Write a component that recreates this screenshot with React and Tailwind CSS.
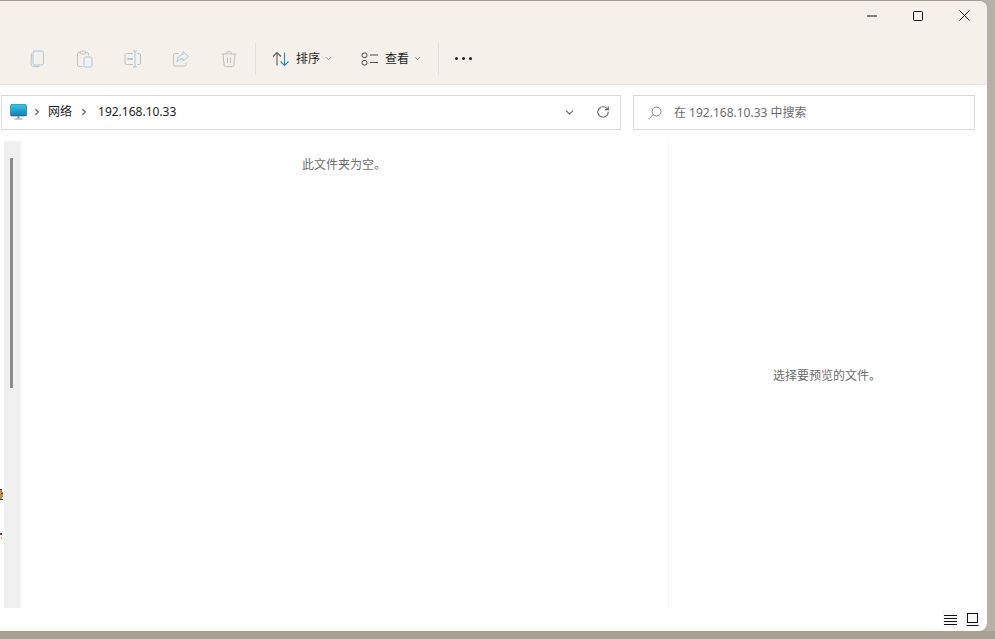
import { ChevronDown, ChevronRight, RotateCw } from 'lucide-react';

const FONT = "font-['Noto_Sans','Noto_Sans_CJK_SC',sans-serif]";

function CopyIcon() {
    return (
        <svg width="18" height="18" viewBox="0 0 18 18" fill="none">
            <path d="M3.5 3.5 L3 14 Q3 16.5 5.5 16.5 L11.5 16.5" stroke="#c4c1bc" strokeWidth="1" />
            <rect x="5" y="1" width="10.5" height="14" rx="2" stroke="#a3cbe8" strokeWidth="1" />
        </svg>
    );
}

function PasteIcon() {
    return (
        <svg width="18" height="18" viewBox="0 0 18 18" fill="none">
            <path d="M6 16.5 H3 Q1.5 16.5 1.5 15 V4 Q1.5 2.5 3 2.5 H11 Q12.5 2.5 12.5 4 V5.5" stroke="#c4c1bc" strokeWidth="1" />
            <rect x="4.5" y="1" width="5" height="3" rx="1" stroke="#c4c1bc" strokeWidth="1" fill="#f5f0ea" />
            <rect x="8" y="7" width="8" height="10" rx="1.5" stroke="#a3cbe8" strokeWidth="1" />
        </svg>
    );
}

function RenameIcon() {
    return (
        <svg width="18" height="18" viewBox="0 0 18 18" fill="none">
            <path d="M9 3.5 H2.5 Q1 3.5 1 5 V13 Q1 14.500 2.500 14.500 H9" stroke="#c4c1bc" strokeWidth="1" />
            <path d="M13.500 3.500 H15 Q16.500 3.500 16.500 5 V13 Q16.500 14.500 15 14.500 H13.500" stroke="#c4c1bc" strokeWidth="1" />
            <path d="M9 1 H13 M11 1 V17 M9 17 H13" stroke="#a3cbe8" strokeWidth="1" />
            <path d="M3.500 9 H9" stroke="#a3cbe8" strokeWidth="2" />
        </svg>
    );
}

function ShareIcon() {
    return (
        <svg width="18" height="18" viewBox="0 0 18 18" fill="none">
            <path d="M6.500 3.500 H3 Q1.500 3.500 1.500 5 V14.500 Q1.500 16 3 16 H12.500 Q14 16 14 14.500 V12.500" stroke="#c4c1bc" strokeWidth="1" />
            <path d="M11 1.500 L16.500 6.500 L11 11 V8.500 Q7 8.500 5 12 Q5.500 5 11 4.500 Z" stroke="#a3cbe8" strokeWidth="1" strokeLinejoin="round" />
        </svg>
    );
}

function TrashIcon() {
    return (
        <svg width="18" height="18" viewBox="0 0 18 18" fill="none" stroke="#c4c1bc" strokeWidth="1">
            <path d="M1.500 4 H16.500 M6.500 4 Q6.500 1.500 9 1.500 Q11.500 1.500 11.500 4" />
            <path d="M3 4 L4 15 Q4.200 16.500 5.700 16.500 H12.300 Q13.800 16.500 14 15 L15 4" />
            <path d="M7.500 7.500 V13 M10.500 7.500 V13" />
        </svg>
    );
}

function SortIcon() {
    return (
        <svg width="18" height="16" viewBox="0 0 18 16" fill="none" strokeWidth="1.100">
            <path d="M5 14.500 V1.500 M1 5.500 L5 1.500 L9 5.500" stroke="#5c5a58" />
            <path d="M12.500 1.500 V14.500 M8.500 10.500 L12.500 14.500 L16.500 10.500" stroke="#1f8ad6" />
        </svg>
    );
}

function ViewIcon() {
    return (
        <svg width="18" height="14" viewBox="0 0 18 14" fill="none" stroke="#4a4a4a" strokeWidth="1">
            <rect x="1" y="1" width="5" height="4.500" rx="2" />
            <rect x="1" y="8.500" width="5" height="4.500" rx="2" />
            <path d="M9 3 H17 M9 10.500 H17" />
        </svg>
    );
}

function MonitorIcon() {
    return (
        <svg width="17" height="16" viewBox="0 0 17 16" fill="none">
            <defs>
                <linearGradient id="screen" x1="0" y1="0" x2="0" y2="1">
                    <stop offset="0" stopColor="#37c6e6" />
                    <stop offset="1" stopColor="#0f7fb0" />
                </linearGradient>
            </defs>
            <rect x="0.500" y="0.500" width="16" height="11.500" rx="1" fill="url(#screen)" stroke="#14698f" strokeWidth="0.600" />
            <rect x="7.500" y="12" width="2" height="2.500" fill="#8c9297" />
            <rect x="4.500" y="14.500" width="8" height="1" fill="#8c9297" />
        </svg>
    );
}

function SearchIcon() {
    return (
        <svg width="14" height="14" viewBox="0 0 14 14" fill="none">
            <circle cx="8.500" cy="5.500" r="4.500" stroke="#8a8580" strokeWidth="1" />
            <path d="M5.300 8.700 L0.700 13.300" stroke="#b09a92" strokeWidth="1.100" />
        </svg>
    );
}

function ToolButton({ children }) {
    return <div className="w-12 flex items-center justify-center">{children}</div>;
}

export default function App() {
    return (
        <div className={`w-[995px] h-[639px] overflow-hidden flex flex-col bg-[#b8b0a4] ${FONT}`}>
            <div className="w-[987px] h-[631px] shrink-0 flex flex-col bg-white rounded-r-lg overflow-hidden border-t border-[#a39d93]">
                {/* title + command bar */}
                <div className="h-[84px] shrink-0 bg-[#f5f0ea] border-b border-[#e4e1dc] flex flex-col">
                    <div className="h-[29px] flex justify-end items-center pr-[17px] gap-[36px] text-black">
                        <svg width="10" height="10" viewBox="0 0 10 10" fill="none" stroke="#111" strokeWidth="1"><path d="M0 5 H10" /></svg>
                        <svg width="10" height="10" viewBox="0 0 10 10" fill="none" stroke="#111" strokeWidth="1"><rect x="0.500" y="0.500" width="9" height="9" rx="1" /></svg>
                        <svg width="11" height="11" viewBox="0 0 11 11" fill="none" stroke="#111" strokeWidth="1"><path d="M0.500 0.500 L10.500 10.500 M10.500 0.500 L0.500 10.500" /></svg>
                    </div>
                    <div className="h-[33px] mt-[12px] flex items-center pl-[13px]">
                        <ToolButton><CopyIcon /></ToolButton>
                        <ToolButton><PasteIcon /></ToolButton>
                        <ToolButton><RenameIcon /></ToolButton>
                        <ToolButton><ShareIcon /></ToolButton>
                        <ToolButton><TrashIcon /></ToolButton>
                        <div className="w-px h-8 bg-[#e3e0db] ml-[2px]" />
                        <div className="flex items-center ml-[16px] text-xs text-[#1c1c1c]">
                            <SortIcon />
                            <span className="ml-[6px]">排序</span>
                            <ChevronDown size={9} className="ml-[4px] text-[#777]" />
                        </div>
                        <div className="flex items-center ml-[28px] text-xs text-[#1c1c1c]">
                            <ViewIcon />
                            <span className="ml-[6px]">查看</span>
                            <ChevronDown size={9} className="ml-[4px] text-[#777]" />
                        </div>
                        <div className="w-px h-8 bg-[#e3e0db] ml-[16px]" />
                        <div className="flex items-center gap-[4px] ml-[16px]">
                            <span className="w-[3px] h-[3px] rounded-full bg-[#222]" />
                            <span className="w-[3px] h-[3px] rounded-full bg-[#222]" />
                            <span className="w-[3px] h-[3px] rounded-full bg-[#222]" />
                        </div>
                    </div>
                </div>

                {/* address + search */}
                <div className="h-[56px] shrink-0 flex items-start pt-[10px] pl-[1px] pr-[12px] gap-[12px]">
                    <div className="w-[620px] h-[35px] border border-[#d9d9d9] flex items-center pl-[8px] pr-[10px] pb-[1px] text-xs text-[#1c1c1c]">
                        <MonitorIcon />
                        <ChevronRight size={10} strokeWidth={3} className="ml-[5px] text-[#666]" />
                        <span className="ml-[6px]">网络</span>
                        <ChevronRight size={10} strokeWidth={3} className="ml-[7px] text-[#666]" />
                        <span className="ml-[9px]">192.168.10.33</span>
                        <ChevronDown size={13} className="ml-auto text-[#666]" />
                        <RotateCw size={14} className="ml-[20px] text-[#666]" />
                    </div>
                    <div className="flex-1 h-[35px] border border-[#d9d9d9] flex items-center pl-[14px] text-xs text-[#6b6b6b]">
                        <SearchIcon />
                        <span className="ml-[12px]">在 192.168.10.33 中搜索</span>
                    </div>
                </div>

                {/* panes */}
                <div className="h-[467px] shrink-0 flex relative">
                    <div className="w-[4px] relative">
                        <svg className="absolute left-0 top-[348px]" width="4" height="58" viewBox="0 0 4 58">
                            <path d="M0 1 H2 V3 H3 V8 H2 V10 H0 Z" fill="#c98a3c" />
                            <path d="M0 0 H2 V1 H0 Z M1 4 H3 V5 H1 Z M0 10 H3 V11 H0 Z" fill="#2c3a5c" />
                            <path d="M0 44 H2 V46 H0 Z" fill="#5c3a78" />
                            <path d="M1 48 H2 V50 H1 Z" fill="#e8a020" />
                        </svg>
                    </div>
                    <div className="w-[16px] bg-[#f0f0f0] pt-[17px] pl-[6px]">
                        <div className="w-[3px] h-[230px] bg-[#8c8c8c]" />
                    </div>
                    <div className="w-[2px] bg-[#f8f8f8]" />
                    <div className="w-[647px] border-r border-[#f6f6f6] pt-[16px] text-center text-xs text-[#6d6d6d]">
                        <p className="pr-[2px]">此文件夹为空。</p>
                    </div>
                    <div className="flex-1 flex items-center justify-center text-xs text-[#6d6d6d]">
                        <p className="mr-[2px] mt-[3px]">选择要预览的文件。</p>
                    </div>
                </div>

                {/* status bar */}
                <div className="flex-1 flex items-start justify-end pt-[2px] pr-[7px] gap-[6px]">
                    <div className="w-4 h-[18px] bg-[#f7f7f7] flex items-center justify-center">
                        <svg width="13" height="11" viewBox="0 0 13 11" stroke="#111" strokeWidth="1"><path d="M0 1.500 H13 M0 4.500 H13 M0 7.500 H13 M0 10.500 H13" /></svg>
                    </div>
                    <div className="w-4 h-[18px] bg-[#f7f7f7] flex items-center justify-center">
                        <svg width="13" height="13" viewBox="0 0 13 13" fill="none" stroke="#111" strokeWidth="1"><rect x="1.500" y="0.500" width="10" height="9" /><path d="M0.500 12.500 H12.500" /></svg>
                    </div>
                </div>
            </div>
            <div className="flex-1 bg-[#a89f90]" />
        </div>
    );
}
